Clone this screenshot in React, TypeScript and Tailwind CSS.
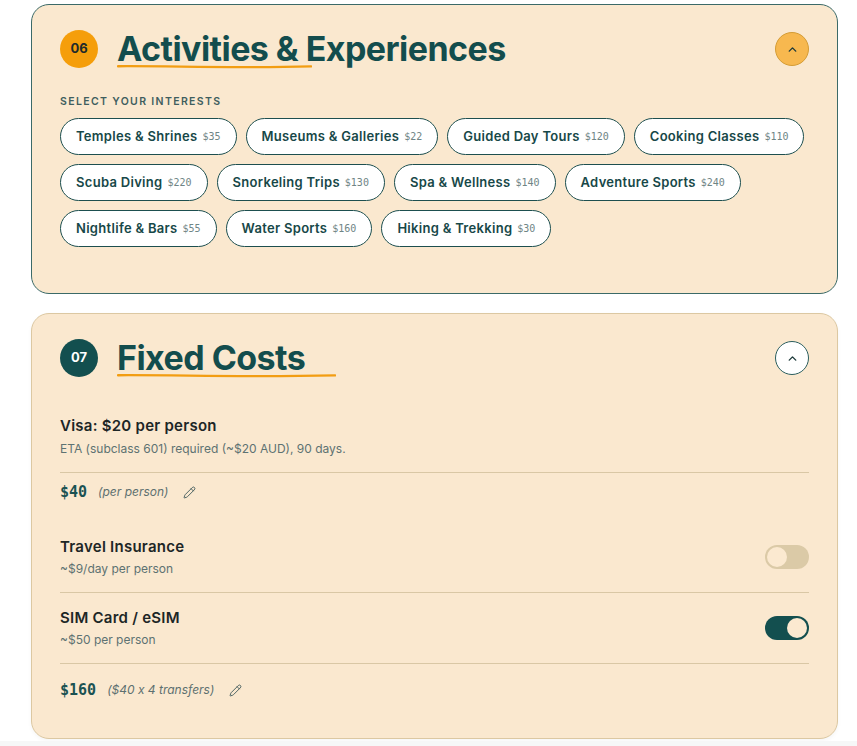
import React from "react";
import { ChevronUp, Pencil } from "lucide-react";

type ChipT = { name: string; price: string };

const rows: ChipT[][] = [
  [
    { name: "Temples & Shrines", price: "$35" },
    { name: "Museums & Galleries", price: "$22" },
    { name: "Guided Day Tours", price: "$120" },
    { name: "Cooking Classes", price: "$110" },
  ],
  [
    { name: "Scuba Diving", price: "$220" },
    { name: "Snorkeling Trips", price: "$130" },
    { name: "Spa & Wellness", price: "$140" },
    { name: "Adventure Sports", price: "$240" },
  ],
  [
    { name: "Nightlife & Bars", price: "$55" },
    { name: "Water Sports", price: "$160" },
    { name: "Hiking & Trekking", price: "$30" },
  ],
];

function Chip({ name, price }: ChipT) {
  return (
    <div className="flex h-[37px] shrink-0 items-center gap-[5px] whitespace-nowrap rounded-full border-[1.5px] border-[#1d4f4f] bg-white px-[15px]">
      <span className="font-['Inter',sans-serif] text-[13px] font-semibold tracking-[0.3px] text-[#174848]">{name}</span>
      <span className="font-['DejaVu_Sans_Mono',monospace] text-[10px] text-[#6f8585]">{price}</span>
    </div>
  );
}

function Toggle({ on }: { on: boolean }) {
  return (
    <div
      className={
        on
          ? "flex h-[24px] w-[44px] items-center justify-end rounded-full bg-[#134f4f] px-[2px]"
          : "flex h-[24px] w-[44px] items-center justify-start rounded-full bg-[#dbcaa7] px-[2px]"
      }
    >
      <div className="h-[20px] w-[20px] rounded-full bg-[#fbe9d0]" />
    </div>
  );
}

function Title({ text, underlineWidth }: { text: string; underlineWidth: number }) {
  return (
    <div className="relative">
      <h2 className="font-['Inter',sans-serif] text-[34px] font-bold leading-[42px] tracking-[-0.55px] text-[#134d4d]">
        {text}
      </h2>
      <svg
        className="absolute left-0 top-[35px]"
        width={underlineWidth}
        height="8"
        viewBox={`0 0 ${underlineWidth} 8`}
        fill="none"
      >
        <path
          d={`M1 3.2 C ${underlineWidth * 0.3} 2.8, ${underlineWidth * 0.55} 5.6, ${underlineWidth - 1} 3.4`}
          stroke="#f29d12"
          strokeWidth="2.4"
          strokeLinecap="round"
        />
      </svg>
    </div>
  );
}

const itemTitle =
  "font-['Inter',sans-serif] text-[15px] font-semibold leading-[22px] tracking-[0.25px] text-[#1d2626]";
const itemSub = "font-['Inter',sans-serif] text-[12px] leading-[18px] text-[#5d7272]";

export default function App() {
  return (
    <div className="flex min-h-[746px] w-[857px] flex-col bg-white">
      <div className="flex w-[838px] flex-col gap-[19px] pl-[31px] pt-[4px]">
        {/* Card 06 */}
        <section className="rounded-[18px] border border-[#3b6a68] bg-[#fae8cf] px-[28px] pb-[46px] pt-[23px]">
          <div className="flex h-[42px] items-center justify-between">
            <div className="flex items-center gap-[19px]">
              <div className="flex h-[38px] w-[38px] items-center justify-center rounded-full bg-[#f59e0b] font-['Inter',sans-serif] text-[13px] font-bold text-[#1e2a2a]">
                06
              </div>
              <Title text="Activities & Experiences" underlineWidth={195} />
            </div>
            <div className="flex h-[34px] w-[34px] items-center justify-center rounded-full border border-[#d49c35] bg-[#f7b84f]">
              <ChevronUp size={13} strokeWidth={2.6} color="#1e3b3b" />
            </div>
          </div>
          <div className="mt-[26px] font-['Inter',sans-serif] text-[10.5px] font-semibold leading-[12px] tracking-[1.35px] text-[#3f5e5e]">
            SELECT YOUR INTERESTS
          </div>
          <div className="mt-[10px] flex flex-col gap-[9px]">
            {rows.map((r, i) => (
              <div key={i} className="flex gap-[9px]">
                {r.map((c) => (
                  <Chip key={c.name} {...c} />
                ))}
              </div>
            ))}
          </div>
        </section>

        {/* Card 07 */}
        <section className="rounded-[18px] border border-[#dcc8a2] bg-[#fae8cf] px-[28px] pb-[38px] pt-[23px] shadow-[0_2px_4px_rgba(0,0,0,0.04)]">
          <div className="flex h-[42px] items-center justify-between">
            <div className="flex items-center gap-[19px]">
              <div className="flex h-[38px] w-[38px] items-center justify-center rounded-full bg-[#134f4f] font-['Inter',sans-serif] text-[13px] font-bold text-white">
                07
              </div>
              <Title text="Fixed Costs" underlineWidth={219} />
            </div>
            <div className="flex h-[34px] w-[34px] items-center justify-center rounded-full border-[1.5px] border-[#2b5e5e] bg-white">
              <ChevronUp size={13} strokeWidth={2.6} color="#1e3b3b" />
            </div>
          </div>

          <div className="mt-[36px] border-b border-[#d9c7a5] pb-[14px]">
            <div className={itemTitle}>Visa: $20 per person</div>
            <div className={"mt-[3px] " + itemSub}>ETA (subclass 601) required (~$20 AUD), 90 days.</div>
          </div>
          <div className="mt-[9px] flex h-[20px] items-center">
            <span className="font-['DejaVu_Sans_Mono',monospace] text-[15px] font-bold text-[#1a5252]">$40</span>
            <span className="ml-[11px] font-['Inter',sans-serif] text-[12px] italic text-[#5d7070] [font-feature-settings:'calt'_0]">
              (per person)
            </span>
            <Pencil size={13} strokeWidth={1.8} color="#4b6262" className="ml-[15px]" />
          </div>

          <div className="mt-[20px] flex items-center justify-between border-b border-[#d9c7a5] py-[14px]">
            <div>
              <div className={itemTitle}>Travel Insurance</div>
              <div className={"mt-[2px] " + itemSub}>~$9/day per person</div>
            </div>
            <Toggle on={false} />
          </div>
          <div className="flex items-center justify-between border-b border-[#d9c7a5] py-[14px]">
            <div>
              <div className={itemTitle}>SIM Card / eSIM</div>
              <div className={"mt-[2px] " + itemSub}>~$50 per person</div>
            </div>
            <Toggle on={true} />
          </div>
          <div className="mt-[16px] flex h-[20px] items-center">
            <span className="font-['DejaVu_Sans_Mono',monospace] text-[15px] font-bold text-[#1a5252]">$160</span>
            <span className="ml-[11px] font-['Inter',sans-serif] text-[12px] italic text-[#5d7070] [font-feature-settings:'calt'_0]">
              ($40 x 4 transfers)
            </span>
            <Pencil size={13} strokeWidth={1.8} color="#4b6262" className="ml-[15px]" />
          </div>
        </section>
      </div>
      <div className="mt-[2px] flex-1 bg-[#f6f7f7]" />
    </div>
  );
}
